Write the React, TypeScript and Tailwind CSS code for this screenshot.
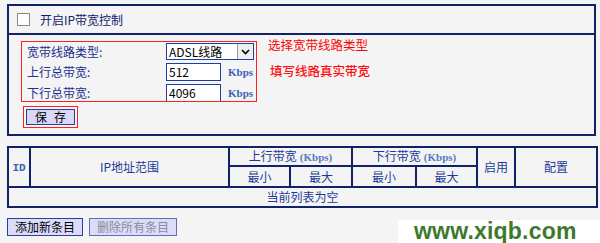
import React from "react";

const NAVY = "border-[#0f2366]";

export default function App() {
  const cjk = { fontFamily: '"Noto Sans CJK SC", "Noto Sans", sans-serif' };
  const th =
    "border-2 border-[#0f2366] text-[#1d3b99] text-[12px] font-normal text-center p-0 leading-none";
  const kb = { fontFamily: '"Liberation Serif", serif' };
  return (
    <div
      className="relative w-[600px] h-[243px] overflow-hidden bg-[#f4f4f4] pt-[4px] pl-[7px]"
      style={cjk}
    >
      {/* Top panel */}
      <div className={`w-[589px] h-[132px] border-2 ${NAVY} flex flex-col`}>
        <div className="h-[27px] flex items-center pl-[8px]">
          <div className="w-[13px] h-[13px] bg-white border border-[#8a8a8a]" />
          <span className="ml-[10px] text-[12px] text-[#14206a] leading-none">
            开启IP带宽控制
          </span>
        </div>
        <div className="h-[2px] bg-[#0f2366]" />
        <div className="flex pl-[12px] pt-[6px]">
          <div className="flex flex-col">
            <div className="w-[236px] h-[61px] border border-[#ff2020] overflow-hidden pl-[5px] pt-[1px]">
              <div className="flex items-center h-[17px]">
                <span className="w-[139px] text-[12px] text-[#1d2f90] leading-none">
                  宽带线路类型:
                </span>
                <div className="w-[88px] h-[17px] bg-white border border-[#1c3fa0] flex items-center">
                  <span className="flex-1 pl-[2px] text-[12px] text-black leading-none">
                    ADSL线路
                  </span>
                  <div className="w-[16px] h-[15px] bg-[#eeeeee] border-l border-[#9a9a9a] flex items-center justify-center">
                    <svg width="9" height="6" viewBox="0 0 9 6">
                      <path d="M1 1 L4.5 4.5 L8 1" stroke="#000" strokeWidth="1.6" fill="none" />
                    </svg>
                  </div>
                </div>
              </div>
              <div className="flex items-center h-[18px] mt-[3px]">
                <span className="w-[139px] text-[12px] text-[#1d2f90] leading-none">
                  上行总带宽:
                </span>
                <div className="w-[55px] h-[18px] bg-white border border-[#1c3fa0] flex items-center pl-[2px] text-[12px] text-black leading-none">
                  512
                </div>
                <span className="ml-[7px] text-[11px] font-bold text-[#3b63b8] leading-none" style={kb}>
                  Kbps
                </span>
              </div>
              <div className="flex items-center h-[18px] mt-[3px]">
                <span className="w-[139px] text-[12px] text-[#1d2f90] leading-none">
                  下行总带宽:
                </span>
                <div className="w-[55px] h-[18px] bg-white border border-[#1c3fa0] flex items-center pl-[2px] text-[12px] text-black leading-none">
                  4096
                </div>
                <span className="ml-[7px] text-[11px] font-bold text-[#3b63b8] leading-none" style={kb}>
                  Kbps
                </span>
              </div>
            </div>
            <div className="ml-[2px] mt-[4px] w-[55px] h-[22px] border border-[#ff2020] p-[2px]">
              <div className="w-[49px] h-[16px] bg-[#d9d9f7] border border-[#2a3f9a] flex items-center justify-center gap-[7px] text-[12px] text-black leading-none">
                <span>保</span>
                <span>存</span>
              </div>
            </div>
          </div>
          <div className="ml-[11px] flex flex-col">
            <span className="mt-[-2px] text-[12.5px] text-[#ff0000] leading-none">
              选择宽带线路类型
            </span>
            <span className="mt-[13px] ml-[2px] text-[12.5px] text-[#ff1010] font-medium leading-none">
              填写线路真实带宽
            </span>
          </div>
        </div>
      </div>

      {/* Table */}
      <table className="mt-[10px] w-[589px] border-collapse table-fixed border-2 border-[#0f2366]">
        <colgroup>
          <col className="w-[22px]" />
          <col className="w-[199px]" />
          <col className="w-[61px]" />
          <col className="w-[62px]" />
          <col className="w-[64px]" />
          <col className="w-[61px]" />
          <col className="w-[38px]" />
          <col className="w-[82px]" />
        </colgroup>
        <tbody>
          <tr className="h-[19px]">
            <td rowSpan={2} className={th}>
              <span className="text-[11px] font-bold text-[#3b63b8]" style={{ fontFamily: '"Liberation Mono", monospace' }}>
                ID
              </span>
            </td>
            <td rowSpan={2} className={th}>
              IP地址范围
            </td>
            <td colSpan={2} className={th}>
              上行带宽
              <span className="ml-[3px] text-[11px] font-bold text-[#5a78c0]" style={kb}>
                (Kbps)
              </span>
            </td>
            <td colSpan={2} className={th}>
              下行带宽
              <span className="ml-[3px] text-[11px] font-bold text-[#5a78c0]" style={kb}>
                (Kbps)
              </span>
            </td>
            <td rowSpan={2} className={th}>
              启用
            </td>
            <td rowSpan={2} className={th}>
              配置
            </td>
          </tr>
          <tr className="h-[21px]">
            <td className={th}>最小</td>
            <td className={th}>最大</td>
            <td className={th}>最小</td>
            <td className={th}>最大</td>
          </tr>
          <tr className="h-[20px]">
            <td colSpan={8} className={`${th} text-[#0c1a66]`}>
              当前列表为空
            </td>
          </tr>
        </tbody>
      </table>

      {/* Buttons */}
      <div className="mt-[10px] flex gap-[6px]">
        <div className="w-[76px] h-[18px] bg-[#dcdcfa] border border-[#2a3f9a] flex items-center justify-center text-[12px] text-black leading-none">
          添加新条目
        </div>
        <div className="w-[88px] h-[18px] bg-[#dcdcfa] border border-[#5d6fb5] flex items-center justify-center text-[12px] text-[#8a8a9a] leading-none">
          删除所有条目
        </div>
      </div>

      {/* Watermark */}
      <div className="absolute left-[398px] top-[220px] w-[202px] h-[23px] bg-white flex items-center pl-[16px]">
        <span
          className="text-[23px] font-bold text-[#3d7a2e] leading-none tracking-[0.2px]"
          style={{ fontFamily: '"Liberation Sans", Arial, sans-serif' }}
        >
          www.xiqb.com
        </span>
      </div>
    </div>
  );
}
